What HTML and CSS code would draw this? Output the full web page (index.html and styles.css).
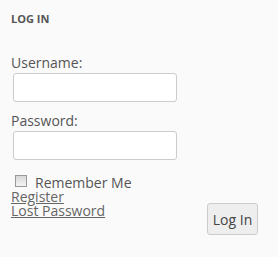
FILE: index.html
```html
<!DOCTYPE html>
<html>
<head>
<meta charset="utf-8">
<link rel="stylesheet" href="styles.css">
</head>
<body>
<div class="widget">
  <h2 class="widget-title">Log In</h2>
  <form class="login-form">
    <p class="field">
      <label class="field-label" for="user">Username:</label>
      <input class="text-input" id="user" type="text">
    </p>
    <p class="field">
      <label class="field-label" for="pass">Password:</label>
      <input class="text-input" id="pass" type="password">
    </p>
    <div class="remember">
      <span class="checkbox"></span>
      <span class="remember-text">Remember Me</span>
    </div>
    <div class="bottom-row">
      <div class="links">
        <a class="link" href="#">Register</a>
        <a class="link" href="#">Lost Password</a>
      </div>
      <button class="submit" type="button">Log In</button>
    </div>
  </form>
</div>
</body>
</html>
```

FILE: styles.css
```css
html, body {
  margin: 0;
  padding: 0;
  background: #fafafa;
}
body {
  font-family: "Open Sans", "Liberation Sans", sans-serif;
  color: #555;
  width: 278px;
  height: 257px;
  overflow: hidden;
}
.widget {
  padding: 12px 11px 0 11px;
}
.widget-title {
  margin: 0;
  font-size: 11px;
  font-weight: 700;
  text-transform: uppercase;
  line-height: 14px;
  color: #555;
}
.login-form {
  margin-top: 27px;
}
.field {
  margin: 0 0 9px 0;
}
.field-label {
  display: block;
  font-size: 14px;
  line-height: 19px;
  color: #555;
}
.text-input {
  display: block;
  box-sizing: border-box;
  margin: 1px 0 0 2px;
  width: 164px;
  height: 29px;
  border: 1px solid #ccc;
  border-radius: 3px;
  background: #fff;
  padding: 0 6px;
}
.remember {
  display: flex;
  align-items: flex-start;
  gap: 8px;
  margin-top: 16px;
  height: 14px;
  padding-left: 4px;
}
.checkbox {
  box-sizing: border-box;
  width: 12px;
  height: 12px;
  margin-top: -1px;
  border: 1px solid #999;
  background: linear-gradient(#d8d8d8, #f4f4f4);
}
.remember-text {
  font-size: 14px;
  line-height: 14px;
}
.bottom-row {
  display: flex;
  justify-content: space-between;
  align-items: flex-start;
}
.links {
  display: flex;
  flex-direction: column;
}
.link {
  font-size: 14px;
  line-height: 14px;
  color: #666;
  text-decoration: underline;
}
.submit {
  margin-top: 13px;
  margin-right: 9px;
  width: 51px;
  height: 32px;
  box-sizing: border-box;
  border: 1px solid #ccc;
  border-radius: 3px;
  background: #eee;
  font-family: "Open Sans", "Liberation Sans", sans-serif;
  font-size: 14px;
  color: #444;
  padding: 0;
}
```
